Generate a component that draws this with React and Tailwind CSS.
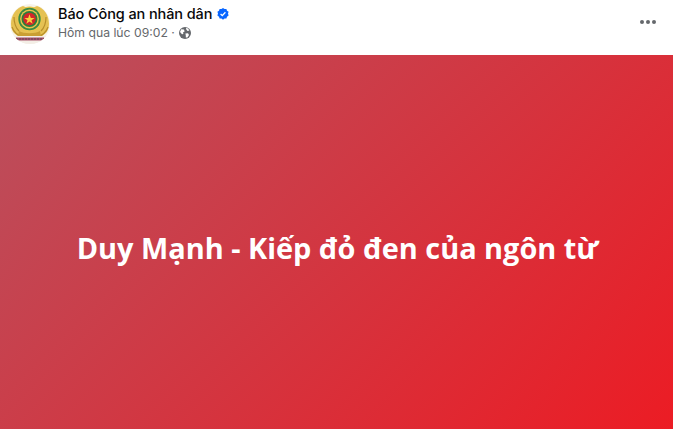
import React from "react";

function Emblem() {
  return (
    <svg width="40" height="40" viewBox="0 0 40 40" className="block">
      <defs>
        <clipPath id="c"><circle cx="20" cy="20" r="20" /></clipPath>
      </defs>
      <g clipPath="url(#c)">
        <rect width="40" height="40" fill="#f7f3ea" />
        <path d="M1 20C1 11 6 4 13 2L20 5L27 2C34 4 39 11 39 20C39 27 35 31 30 33H10C5 31 1 27 1 20Z" fill="#e5c153" />
        <path d="M2 23C4 29 8 31 12 33M38 23C36 29 32 31 28 33M4 13C4 19 6 24 9 27M36 13C36 19 34 24 31 27" stroke="#b88f2b" strokeWidth="1.2" fill="none" />
        <circle cx="19.5" cy="15" r="12.5" fill="#e9c64e" />
        <circle cx="19.5" cy="15" r="11.2" fill="#3b8a43" />
        <circle cx="19.5" cy="15" r="9.4" fill="#e9c64e" />
        <circle cx="19.5" cy="15" r="8" fill="#2f7d3a" />
        <circle cx="19.5" cy="15" r="6.2" fill="#d3262a" />
        <polygon points="19.5,10.2 20.8,13.9 24.6,13.9 21.5,16.2 22.7,19.8 19.5,17.6 16.3,19.8 17.5,16.2 14.4,13.9 18.2,13.9" fill="#f6d23c" />
        <path d="M9 27C14 30 25 30 30 27L31 32H8Z" fill="#c99f33" />
        <rect x="0" y="32" width="40" height="8" fill="#f3eee6" />
        <rect x="6" y="33.5" width="28" height="3" fill="#a8506a" />
        <path d="M6 35H34" stroke="#5b4a58" strokeWidth="1" strokeDasharray="2 1" />
      </g>
    </svg>
  );
}

function Verified() {
  return (
    <svg width="12" height="12" viewBox="0 0 12 12" className="block">
      <path d="M6 0L7.5 1.1L9.4 1L10 2.7L11.6 3.8L11 5.6L11.6 7.6L10 8.7L9.4 10.6L7.5 10.5L6 11.7L4.5 10.5L2.6 10.6L2 8.7L.4 7.6L1 5.6L.4 3.8L2 2.7L2.6 1L4.5 1.1Z" fill="#0866ff" />
      <path d="M3.6 6L5.3 7.6L8.4 4.3" stroke="#fff" strokeWidth="1.3" fill="none" />
    </svg>
  );
}

function Globe() {
  return (
    <svg width="12" height="12" viewBox="0 0 12 12" className="block">
      <circle cx="6" cy="6" r="6" fill="#65686c" />
      <path d="M2.2 2.2L5 2.6L5.6 4.4L4 5.4L4.4 7L3 7.2L1 5ZM7 .8L9 1.6L10.4 3.4L8.6 4L7.4 2.8ZM6.4 6.4L9 6.2L10 8L8.4 10.4L6.8 10.6L6.8 8.4Z" fill="#fff" />
    </svg>
  );
}

export default function App() {
  return (
    <div className="w-[673px] h-[429px] overflow-hidden bg-white flex flex-col font-['Open_Sans','Noto_Sans',sans-serif]">
      <header className="h-[55px] shrink-0 flex items-start pl-[10px] pr-[17px]">
        <div className="mt-[4px] w-[40px] h-[40px] shrink-0"><Emblem /></div>
        <div className="ml-[8px] mt-[5px] flex flex-col">
          <div className="flex items-center gap-[5px] h-[18px]">
            <span className="text-[14.5px] leading-[18px] font-medium text-[#080809] font-['Inter','Open_Sans',sans-serif] tracking-[-0.1px]">Báo Công an nhân dân</span>
            <Verified />
          </div>
          <div className="flex items-center gap-[4px] h-[16px] mt-[2px]">
            <span className="text-[12.2px] leading-[16px] text-[#65686c] font-['Inter','Open_Sans',sans-serif]">Hôm qua lúc 09:02 ·</span>
            <Globe />
          </div>
        </div>
        <div className="ml-auto mt-[20px] flex gap-[2px]">
          <span className="w-[4px] h-[4px] rounded-full bg-[#65686c]" />
          <span className="w-[4px] h-[4px] rounded-full bg-[#65686c]" />
          <span className="w-[4px] h-[4px] rounded-full bg-[#65686c]" />
        </div>
      </header>
      <main className="flex-1 flex items-center justify-center bg-[linear-gradient(135deg,#b9505e_0%,#ec1c24_100%)]">
        <h1 className="text-[28.9px] leading-[40px] font-bold text-white mt-[11px] ml-[2px]">Duy Mạnh - Kiếp đỏ đen của ngôn từ</h1>
      </main>
    </div>
  );
}
